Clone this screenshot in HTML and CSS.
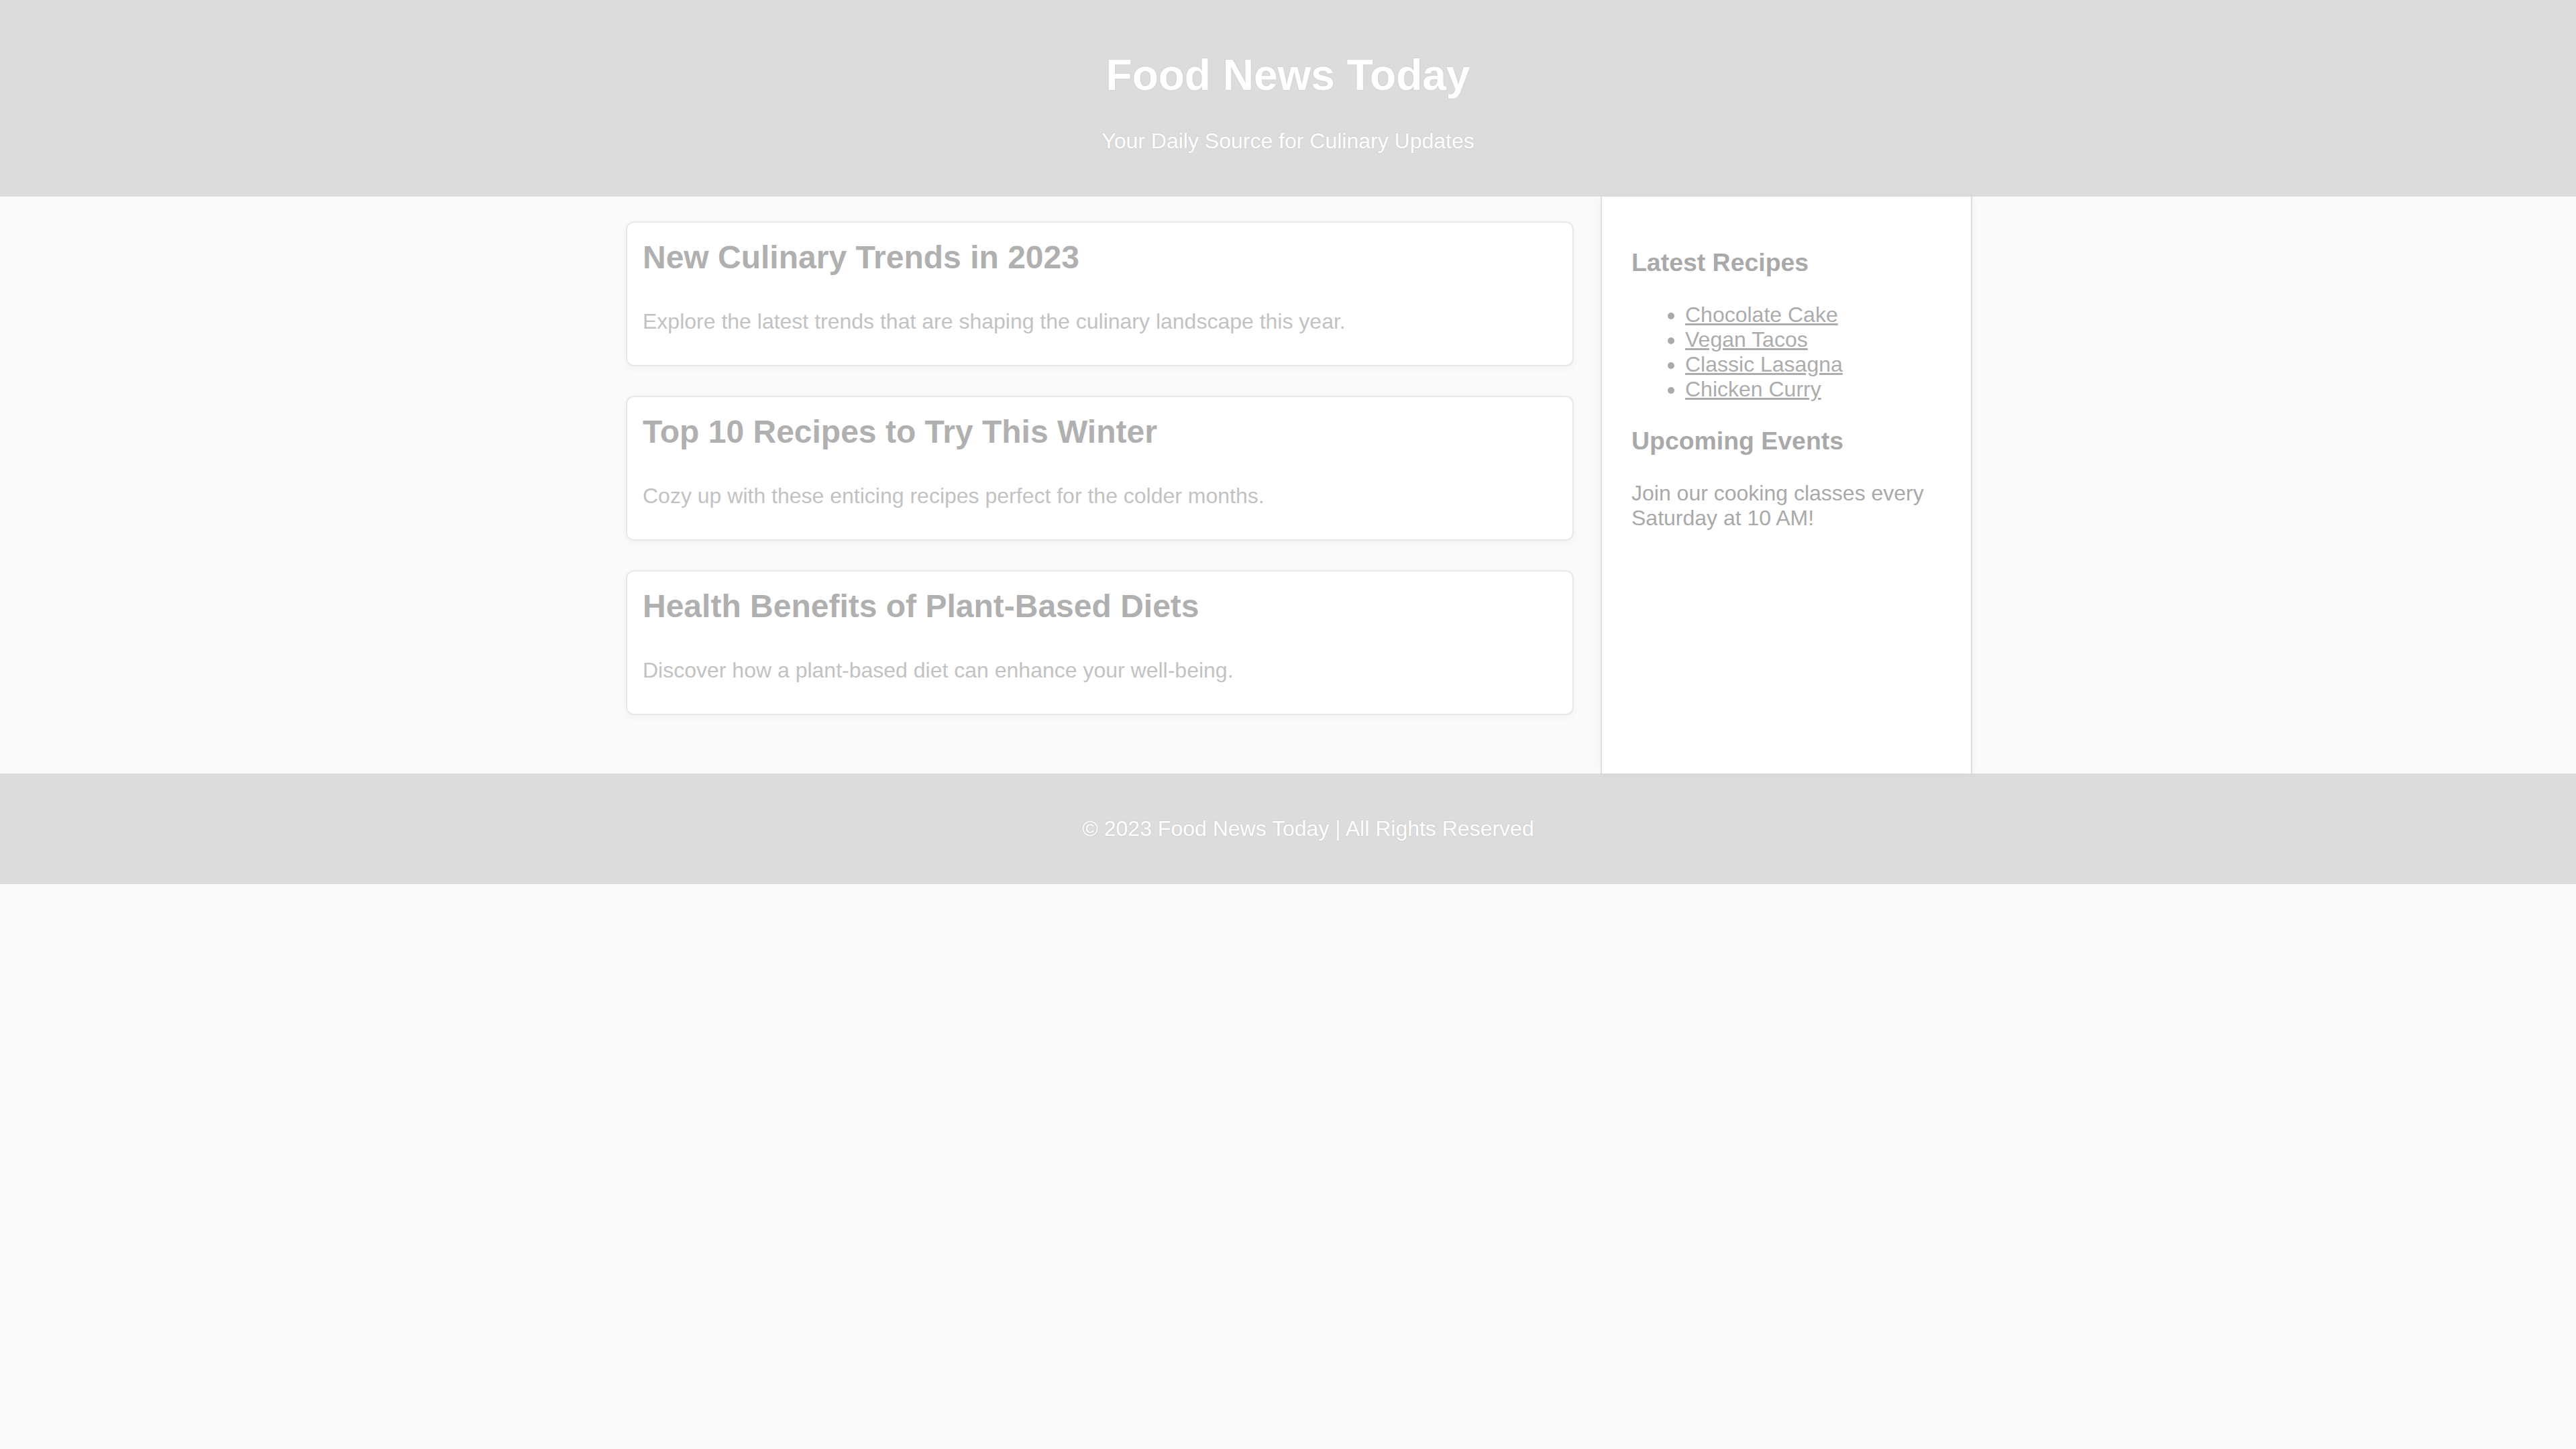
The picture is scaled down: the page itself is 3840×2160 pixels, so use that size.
FILE: index.html
```html
<!DOCTYPE html>
<html lang="en">
<head>
<meta charset="utf-8">
<title>Food News Today</title>
<link rel="stylesheet" href="styles.css">
</head>
<body>
<header class="site-header">
  <h1 class="site-title">Food News Today</h1>
  <p class="site-tagline">Your Daily Source for Culinary Updates</p>
</header>
<main class="layout">
  <section class="articles">
    <article class="card">
      <h2 class="card-title">New Culinary Trends in 2023</h2>
      <p class="card-text">Explore the latest trends that are shaping the culinary landscape this year.</p>
    </article>
    <article class="card">
      <h2 class="card-title">Top 10 Recipes to Try This Winter</h2>
      <p class="card-text">Cozy up with these enticing recipes perfect for the colder months.</p>
    </article>
    <article class="card">
      <h2 class="card-title">Health Benefits of Plant-Based Diets</h2>
      <p class="card-text">Discover how a plant-based diet can enhance your well-being.</p>
    </article>
  </section>
  <aside class="sidebar">
    <h3 class="side-title">Latest Recipes</h3>
    <ul class="recipe-list">
      <li><a href="#">Chocolate Cake</a></li>
      <li><a href="#">Vegan Tacos</a></li>
      <li><a href="#">Classic Lasagna</a></li>
      <li><a href="#">Chicken Curry</a></li>
    </ul>
    <h3 class="side-title">Upcoming Events</h3>
    <p class="side-text">Join our cooking classes every Saturday at 10 AM!</p>
  </aside>
</main>
<footer class="site-footer">
  <p class="footer-text">&copy; 2023 Food News Today | All Rights Reserved</p>
</footer>
</body>
</html>
```
FILE: styles.css
```css
html, body {
  margin: 0;
  padding: 0;
}
body {
  background: #fafafa;
  font-family: "Liberation Sans", Arial, sans-serif;
  font-size: 32px;
  color: #aaaaaa;
}
.site-header {
  background: #dcdcdc;
  color: #ffffff;
  text-align: center;
  padding: 32px;
}
.site-title {
  font-size: 64px;
  font-weight: bold;
  margin: 43px 0;
  text-shadow: 0 0 2px rgba(150,150,150,0.35);
}
.site-tagline {
  margin: 0 0 32px;
  text-shadow: 0 0 2px rgba(150,150,150,0.35);
}
.layout {
  width: 2040px;
  margin: 0 auto;
  display: flex;
  align-items: stretch;
}
.articles {
  flex: 1;
  padding: 37px 40px 43px 33px;
}
.card {
  background: #ffffff;
  border: 2px solid #e8e8e8;
  border-radius: 12px;
  box-shadow: 0 4px 12px rgba(0,0,0,0.035);
  padding: 24px 24px 24px 23px;
  margin-bottom: 44px;
}
.card-title {
  font-size: 48px;
  font-weight: bold;
  color: #b0b0b0;
  margin: 0;
}
.card-text {
  color: #c2c2c2;
  margin: 50px 0 22px;
}
.sidebar {
  width: 470px;
  background: #ffffff;
  border-left: 2px solid #dedede;
  border-right: 2px solid #dedede;
  box-shadow: 0 0 16px rgba(0,0,0,0.03);
  padding: 40px 36px 40px 44px;
}
.side-title {
  font-size: 37.44px;
  font-weight: bold;
  color: #a9a9a9;
  margin: 37.44px 0;
}
.recipe-list {
  margin: 32px 0;
  padding-left: 80px;
}
.recipe-list a {
  color: #acacac;
  text-decoration: underline;
}
.side-text {
  margin: 32px 0;
  color: #a9a9a9;
}
.site-footer {
  background: #dcdcdc;
  color: #ffffff;
  text-align: center;
  padding: 32px;
}
.footer-text {
  margin: 32px 0;
  padding-left: 60px;
  text-shadow: 0 0 2px rgba(150,150,150,0.35);
}
```
